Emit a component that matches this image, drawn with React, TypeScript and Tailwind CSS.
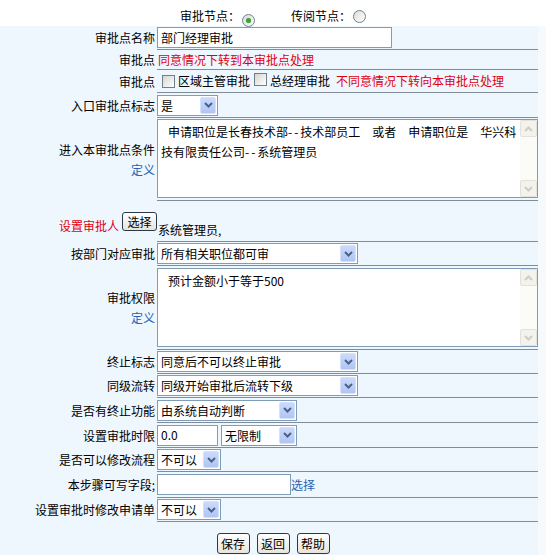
import React from "react";

const Chevron = () => (
  <svg width="9" height="6" viewBox="0 0 9 6">
    <path d="M1 1 L4.5 4.5 L8 1" stroke="#4d6185" strokeWidth="2" fill="none" />
  </svg>
);

function Select({ w, text }: { w: string; text: string }) {
  return (
    <div className={"flex h-[21px] border border-[#7f9db9] bg-white " + w}>
      <span className="flex-1 overflow-hidden whitespace-nowrap pl-[3px] leading-[19px]">{text}</span>
      <span className="m-px flex w-[16px] items-center justify-center rounded-[2px] border border-[#d4e0fc] bg-gradient-to-b from-[#cbdafd] to-[#b0c5f4]">
        <Chevron />
      </span>
    </div>
  );
}

function Radio({ checked }: { checked?: boolean }) {
  return (
    <span className="inline-flex h-[13px] w-[13px] items-center justify-center rounded-full border border-[#6f8194] bg-gradient-to-br from-[#dcdcd6] to-white">
      {checked && <span className="h-[5px] w-[5px] rounded-full bg-[#37a437] shadow-[0_0_1px_#7fd07f]" />}
    </span>
  );
}

function Check() {
  return <span className="inline-block h-[13px] w-[13px] border border-[#6f7f8f] bg-gradient-to-br from-[#d6d6cf] to-white" />;
}

function XpButton({ children, cls }: { children: React.ReactNode; cls: string }) {
  return (
    <span className={"flex items-center justify-center rounded-[3px] border border-[#2a3a4a] bg-gradient-to-b from-white to-[#e6e4dc] text-[12px] " + cls}>
      {children}
    </span>
  );
}

function TextArea({ lines }: { lines: React.ReactNode[] }) {
  return (
    <div className="mt-px flex h-[79px] w-[381px] border border-[#7f9db9] bg-white">
      <div className="flex-1 pl-[3px] pt-[2px] leading-[20px]">
        {lines.map((l, i) => (
          <div key={i} className={i === 0 ? "indent-[7px] whitespace-pre" : "whitespace-pre"}>
            {l}
          </div>
        ))}
      </div>
      <div className="flex w-[17px] flex-col justify-between bg-[#fbfbf8]">
        <span className="flex h-[17px] items-center justify-center rounded-[2px] border border-[#e4e2d8] bg-[#f3f2ec]">
          <svg width="9" height="6" viewBox="0 0 9 6"><path d="M1 5 L4.5 1.5 L8 5" stroke="#cfcdc2" strokeWidth="2" fill="none" /></svg>
        </span>
        <span className="flex h-[17px] items-center justify-center rounded-[2px] border border-[#e4e2d8] bg-[#f3f2ec]">
          <svg width="9" height="6" viewBox="0 0 9 6"><path d="M1 1 L4.5 4.5 L8 1" stroke="#cfcdc2" strokeWidth="2" fill="none" /></svg>
        </span>
      </div>
    </div>
  );
}

function Row({ h, label, children, labelCls = "", valueCls = "" }: { h: string; label: React.ReactNode; children?: React.ReactNode; labelCls?: string; valueCls?: string }) {
  return (
    <div className={"flex " + h}>
      <div className={"flex w-[157px] shrink-0 items-center justify-end pr-[2px] text-right " + labelCls}>{label}</div>
      <div className={"flex flex-1 items-center border-b border-[#808c98] " + valueCls}>{children}</div>
    </div>
  );
}

const Dash = () => <span className="tracking-[2px]">--</span>;

export default function App() {
  return (
    <div className="h-[555px] w-[546px] overflow-hidden bg-[#f7fafd] font-['Noto_Sans_CJK_SC',sans-serif] text-[12px] leading-[16px] text-black">
      <div className="flex h-[26px] items-start justify-center bg-white pt-[8px]">
        <span>审批节点：</span>
        <span className="ml-[2px] mt-[2px]"><Radio checked /></span>
        <span className="ml-[36px]">传阅节点：</span>
        <span className="ml-[2px] mt-[2px]"><Radio /></span>
      </div>
      <div className="w-[538px] bg-[#eef6fe]">
        <Row h="h-[24px]" label="审批点名称">
          <div className="flex h-[21px] w-[235px] items-center border border-[#7f9db9] bg-white pl-[3px]">部门经理审批</div>
        </Row>
        <Row h="h-[20px]" label="审批点" valueCls="pl-[1px]">
          <span className="text-[#dd0011]">同意情况下转到本审批点处理</span>
        </Row>
        <Row h="h-[23px]" label="审批点" valueCls="pl-[5px]">
          <Check />
          <span className="ml-[3px]">区域主管审批</span>
          <span className="ml-[4px]"><Check /></span>
          <span className="ml-[3px]">总经理审批</span>
          <span className="ml-[6px] text-[#dd0011]">不同意情况下转向本审批点处理</span>
        </Row>
        <Row h="h-[25px]" label="入口审批点标志">
          <Select w="w-[61px]" text="是" />
        </Row>
        <Row
          h="h-[83px]"
          label={
            <div className="leading-[20px]">
              <div>进入本审批点条件</div>
              <div className="text-[#2a62b0]">定义</div>
            </div>
          }
          valueCls="items-start"
        >
          <TextArea
            lines={[
              <>申请职位是长春技术部<Dash />技术部员工　或者　申请职位是　华兴科</>,
              <>技有限责任公司<Dash />系统管理员</>,
            ]}
          />
        </Row>
        <div className="flex h-[41px]">
          <div className="flex w-[157px] shrink-0 items-center justify-end">
            <span className="mt-[8px] text-[#dd0011]">设置审批人</span>
            <XpButton cls="ml-[3px] h-[19px] w-[35px]">选择</XpButton>
          </div>
          <div className="flex flex-1 items-start border-b border-[#808c98] pl-[1px] pt-[21px]">系统管理员,</div>
        </div>
        <Row h="h-[24px]" label="按部门对应审批">
          <Select w="w-[201px]" text="所有相关职位都可审" />
        </Row>
        <Row
          h="h-[84px]"
          label={
            <div className="leading-[20px]">
              <div>审批权限</div>
              <div className="text-[#2a62b0]">定义</div>
            </div>
          }
          valueCls="items-start pt-px"
        >
          <TextArea lines={["预计金额小于等于500"]} />
        </Row>
        <Row h="h-[24px]" label="终止标志">
          <Select w="w-[201px]" text="同意后不可以终止审批" />
        </Row>
        <Row h="h-[24px]" label="同级流转">
          <Select w="w-[201px]" text="同级开始审批后流转下级" />
        </Row>
        <Row h="h-[25px]" label="是否有终止功能">
          <Select w="w-[140px]" text="由系统自动判断" />
        </Row>
        <Row h="h-[25px]" label="设置审批时限">
          <div className="flex h-[21px] w-[61px] items-center border border-[#7f9db9] bg-white pl-[3px]">0.0</div>
          <div className="ml-[3px]">
            <Select w="w-[76px]" text="无限制" />
          </div>
        </Row>
        <Row h="h-[24px]" label="是否可以修改流程">
          <Select w="w-[64px]" text="不可以" />
        </Row>
        <Row h="h-[26px]" label="本步骤可写字段;" labelCls="pr-0">
          <div className="h-[21px] w-[134px] border border-[#7f9db9] bg-white" />
          <span className="text-[#2a62b0]">选择</span>
        </Row>
        <Row h="h-[24px]" label="设置审批时修改申请单">
          <Select w="w-[64px]" text="不可以" />
        </Row>
        <div className="flex h-[33px] items-start justify-center gap-[7px] pl-[8px] pt-[11px]">
          <XpButton cls="h-[21px] w-[33px]">保存</XpButton>
          <XpButton cls="h-[21px] w-[33px]">返回</XpButton>
          <XpButton cls="h-[21px] w-[33px]">帮助</XpButton>
        </div>
      </div>
    </div>
  );
}
